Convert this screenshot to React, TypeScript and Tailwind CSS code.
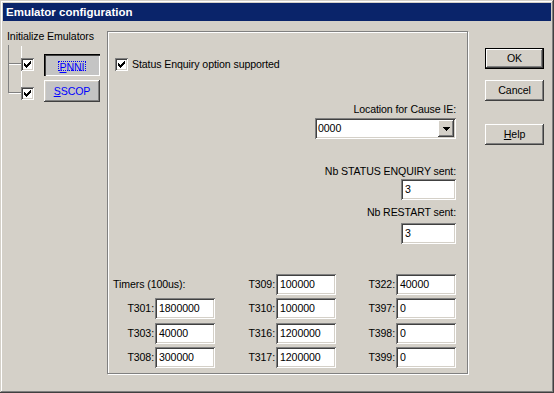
import React from "react";

const RAISED =
  "shadow-[inset_-1px_-1px_0_#404040,inset_1px_1px_0_#ffffff,inset_-2px_-2px_0_#808080,inset_2px_2px_0_#d4d0c8]";
const SUNKEN =
  "shadow-[inset_1px_1px_0_#808080,inset_-1px_-1px_0_#ffffff,inset_2px_2px_0_#404040,inset_-2px_-2px_0_#d4d0c8]";

function CheckMark() {
  return (
    <svg width="7" height="7" viewBox="0 0 7 7" shapeRendering="crispEdges">
      <path
        fill="#000"
        d="M6 0h1v1h-1z M5 1h2v1h-2z M0 2h1v1h-1z M4 2h3v1h-3z M0 3h2v1h-2z M3 3h3v1h-3z M0 4h5v1h-5z M1 5h3v1h-3z M2 6h1v1h-1z"
      />
    </svg>
  );
}

function CheckBox() {
  return (
    <div className={`w-[13px] h-[13px] bg-white flex items-center justify-center ${SUNKEN}`}>
      <CheckMark />
    </div>
  );
}

function TextBox({ value, w = "w-[60px]" }: { value: string; w?: string }) {
  return (
    <div className={`${w} h-[21px] bg-white flex items-center pl-[4px] ${SUNKEN}`}>
      {value}
    </div>
  );
}

function TimerCell({ label, value }: { label: string; value: string }) {
  return (
    <div className="h-[21px] flex items-center justify-end">
      <span>{label}</span>
      <div className="ml-[1px]">
        <TextBox value={value} />
      </div>
    </div>
  );
}

export default function App() {
  return (
    <div
      className={`w-[554px] h-[393px] bg-[#d4d0c8] p-[3px] flex flex-col text-[10.6px] tracking-[-0.1px] leading-[13px] text-black font-['Liberation_Sans',Arial,sans-serif] shadow-[inset_-1px_-1px_0_#404040,inset_1px_1px_0_#d4d0c8,inset_-2px_-2px_0_#808080,inset_2px_2px_0_#ffffff]`}
    >
      <div className="h-[18px] shrink-0 bg-[#0a246a] text-white font-bold text-[11.5px] tracking-normal leading-[18px] pl-[3px]">
        Emulator configuration
      </div>
      <div className="flex flex-1">
        {/* Left column */}
        <div className="w-[104px] shrink-0 pl-[4px] pt-[9px] flex flex-col">
          <div>Initialize Emulators</div>
          <div className="flex mt-[2px]">
            <div className="ml-[1px] w-[13px] flex flex-col">
              <div className="h-[19px] border-l border-b border-[#808080] shadow-[1px_1px_0_#ffffff]" />
              <div className="h-[29px] border-l border-b border-[#808080] shadow-[1px_1px_0_#ffffff]" />
            </div>
            <div className="flex flex-col">
              <div className="mt-[13px]">
                <CheckBox />
              </div>
              <div className="mt-[16px]">
                <CheckBox />
              </div>
            </div>
            <div className="flex flex-col ml-[10px]">
              <button
                className="mt-[9px] w-[56px] h-[22px] bg-[#c4c4c4] flex items-center justify-center text-[#0000ff] shadow-[inset_1px_1px_0_#000000,inset_2px_2px_0_#404040,inset_-1px_-1px_0_#ffffff]"
              >
                <span className="border border-dotted border-[#0000ff] px-[1px] leading-[10px] h-[10px] mt-[1px]">
                  <span className="underline">P</span>NNI
                </span>
              </button>
              <button className={`mt-[4px] w-[56px] h-[22px] bg-[#c4c4c4] flex items-center justify-center text-[#0000ff] ${RAISED}`}>
                <span>
                  <span className="underline">S</span>SCOP
                </span>
              </button>
            </div>
          </div>
        </div>

        {/* Group box */}
        <div className="mt-[10px] w-[361px] h-[343px] shrink-0 border border-[#808080] shadow-[inset_1px_1px_0_#ffffff,1px_1px_0_#ffffff] pl-[5px] pr-[11px] pt-[26px] flex flex-col">
          <div className="flex items-center ml-[2px]">
            <CheckBox />
            <span className="ml-[4px]">Status Enquiry option supported</span>
          </div>

          <div className="self-end mt-[32px]">Location for Cause IE:</div>
          <div className={`self-end mt-[2px] w-[141px] h-[21px] bg-white flex items-center p-[2px] ${SUNKEN}`}>
            <span className="flex-1 pl-[1px]">0000</span>
            <div className={`w-[16px] h-[17px] bg-[#d4d0c8] flex items-center justify-center ${RAISED}`}>
              <svg width="7" height="4" viewBox="0 0 7 4" shapeRendering="crispEdges">
                <path fill="#000" d="M0 0h7v1h-7z M1 1h5v1h-5z M2 2h3v1h-3z M3 3h1v1h-1z" />
              </svg>
            </div>
          </div>

          <div className="self-end mt-[26px]">Nb STATUS ENQUIRY sent:</div>
          <div className="self-end mt-[1px]">
            <TextBox value="3" w="w-[55px]" />
          </div>

          <div className="self-end mt-[6px]">Nb RESTART sent:</div>
          <div className="self-end mt-[4px]">
            <TextBox value="3" w="w-[55px]" />
          </div>

          <div className="mt-[30px] grid grid-cols-[102px_121px_120px] gap-y-[3.3px]">
            <div className="h-[21px] flex items-center">Timers (100us):</div>
            <TimerCell label="T309:" value="100000" />
            <TimerCell label="T322:" value="40000" />

            <TimerCell label="T301:" value="1800000" />
            <TimerCell label="T310:" value="100000" />
            <TimerCell label="T397:" value="0" />

            <TimerCell label="T303:" value="40000" />
            <TimerCell label="T316:" value="1200000" />
            <TimerCell label="T398:" value="0" />

            <TimerCell label="T308:" value="300000" />
            <TimerCell label="T317:" value="1200000" />
            <TimerCell label="T399:" value="0" />
          </div>
        </div>

        {/* Right buttons */}
        <div className="ml-[17px] pt-[27px] flex flex-col">
          <button className="w-[59px] h-[21px] border border-black bg-[#d4d0c8] flex items-center justify-center shadow-[inset_-1px_-1px_0_#404040,inset_1px_1px_0_#ffffff,inset_-2px_-2px_0_#808080]">
            OK
          </button>
          <button className={`mt-[11px] w-[59px] h-[21px] bg-[#d4d0c8] flex items-center justify-center ${RAISED}`}>
            Cancel
          </button>
          <button className={`mt-[23px] w-[59px] h-[21px] bg-[#d4d0c8] flex items-center justify-center ${RAISED}`}>
            <span>
              <span className="underline">H</span>elp
            </span>
          </button>
        </div>
      </div>
    </div>
  );
}
